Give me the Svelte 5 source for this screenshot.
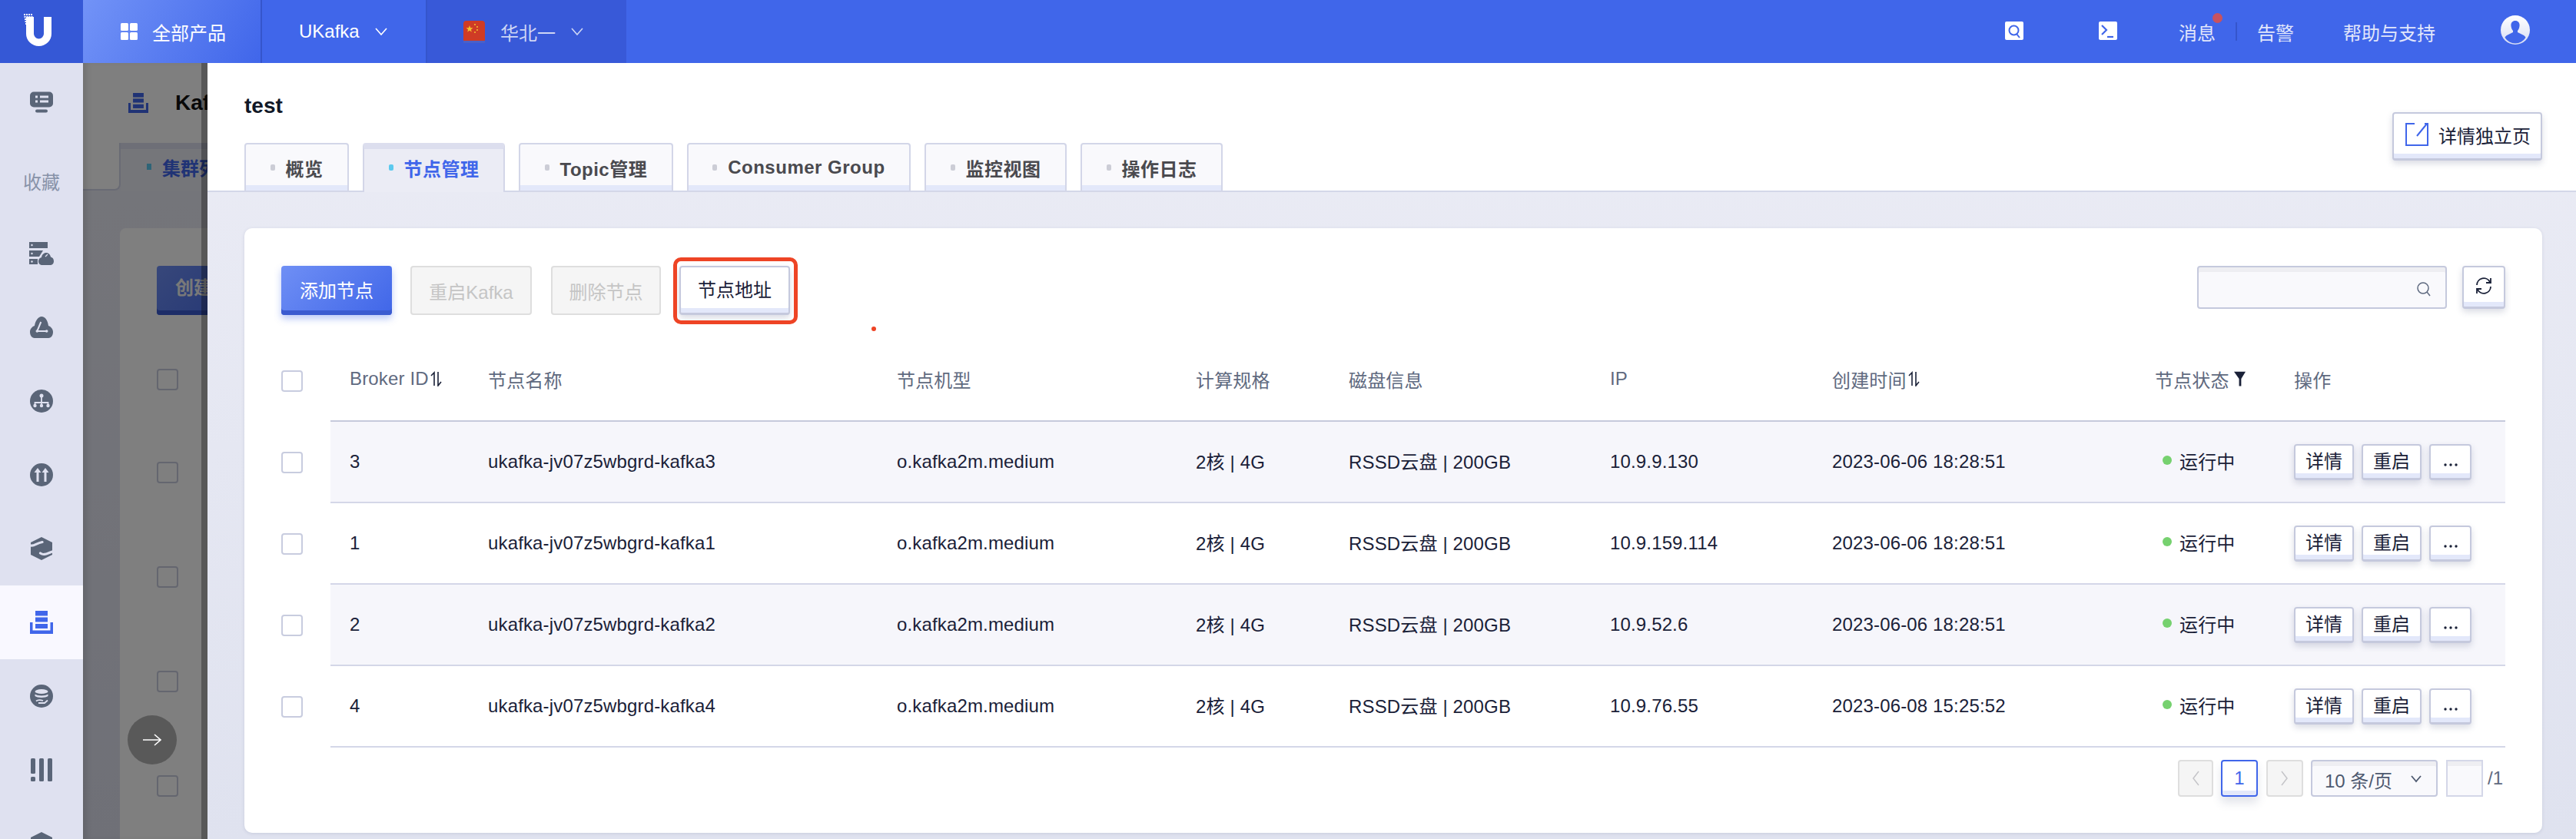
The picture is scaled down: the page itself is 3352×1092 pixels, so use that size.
<script lang="ts">
  const backRows = [0, 1, 2, 3, 4];

  const tabs = [
    { label: '概览' },
    { label: '节点管理', active: true },
    { label: 'Topic管理' },
    { label: 'Consumer Group' },
    { label: '监控视图' },
    { label: '操作日志' }
  ];

  const nodes = [
    { id: 3, name: 'ukafka-jv07z5wbgrd-kafka3', ip: '10.9.9.130', created: '2023-06-06 18:28:51' },
    { id: 1, name: 'ukafka-jv07z5wbgrd-kafka1', ip: '10.9.159.114', created: '2023-06-06 18:28:51' },
    { id: 2, name: 'ukafka-jv07z5wbgrd-kafka2', ip: '10.9.52.6', created: '2023-06-06 18:28:51' },
    { id: 4, name: 'ukafka-jv07z5wbgrd-kafka4', ip: '10.9.76.55', created: '2023-06-08 15:25:52' }
  ];

  const dotRows = [0, 3, 6, 9, 12];
</script>

{#snippet sortIcon()}
  <svg class="sort" viewBox="0 0 16 20" fill="none" stroke="currentColor" stroke-width="1.6" aria-hidden="true">
    <path d="M5 19V2L1 6" />
    <path d="M10 1v18l4-5" />
  </svg>
{/snippet}

{#snippet stackIcon(cls)}
  <svg class={cls} viewBox="0 0 30 30" fill="currentColor" aria-hidden="true">
    <rect x="7" y="0" width="16" height="6.500" />
    <rect x="7" y="8.500" width="16" height="6" />
    <rect x="7" y="17" width="16" height="6" />
    <path d="M0 15h3.500v10.500h23V15H30v15H0z" />
  </svg>
{/snippet}

<div class="app">
  <!-- top bar -->
  <header class="topbar">
    <div class="logo">
      <svg viewBox="0 0 40 44" width="40" height="44" aria-hidden="true">
        <path d="M4 4h10v22a6.500 6.500 0 0 0 13 0V4h10v22a16.500 16 0 0 1-33 0z" fill="#fff" />
        {#each dotRows as y, i}
          <line x1={1 + i * 0.5} y1={y + 1} x2={13 - (i > 2 ? 7 : 0)} y2={y + 1} stroke="#fff" stroke-width="1.800" stroke-dasharray="2 1" />
        {/each}
      </svg>
    </div>
    <div class="nav nav-all">
      <svg viewBox="0 0 22 22" width="22" height="22" fill="#fff" aria-hidden="true">
        <rect width="10" height="10" rx="1.500" />
        <rect x="12" width="10" height="10" rx="1.500" />
        <rect y="12" width="10" height="10" rx="1.500" />
        <rect x="12" y="12" width="10" height="10" rx="1.500" />
      </svg>
      <span>全部产品</span>
    </div>
    <div class="nav nav-product">
      <span>UKafka</span>
      <svg class="chev" viewBox="0 0 16 10" fill="none" stroke="currentColor" stroke-width="1.600" aria-hidden="true"><path d="M1 1l7 8 7-8" /></svg>
    </div>
    <div class="nav nav-region">
      <svg viewBox="0 0 28 29" width="28" height="29" aria-hidden="true">
        <rect width="28" height="29" rx="4" fill="#cf3b25" />
        <rect y="26" width="28" height="3" fill="#4a60c8" />
        <path d="M8 6l1.200 3.200 3.300.1-2.600 2.100.9 3.200L8 12.700l-2.800 1.900.9-3.200L3.500 9.300l3.300-.1z" fill="#f2c230" />
        <circle cx="15" cy="5" r="1" fill="#f2c230" />
        <circle cx="18" cy="8" r="1" fill="#f2c230" />
        <circle cx="18" cy="12" r="1" fill="#f2c230" />
        <circle cx="15" cy="15" r="1" fill="#f2c230" />
      </svg>
      <span>华北一</span>
      <svg class="chev" viewBox="0 0 16 10" fill="none" stroke="currentColor" stroke-width="1.600" aria-hidden="true"><path d="M1 1l7 8 7-8" /></svg>
    </div>

    <div class="top-right">
      <svg class="tool first" viewBox="0 0 24 24" aria-hidden="true">
        <rect width="24" height="24" rx="2" fill="#fff" />
        <circle cx="11.500" cy="11.500" r="6" fill="none" stroke="#4066ea" stroke-width="2" />
        <path d="M15 16l4 5" stroke="#4066ea" stroke-width="2" />
      </svg>
      <svg class="tool" viewBox="0 0 24 24" aria-hidden="true">
        <rect width="24" height="24" rx="2" fill="#fff" />
        <path d="M4 5l6 6-6 6" fill="none" stroke="#4066ea" stroke-width="2.200" />
        <path d="M11 20h8" stroke="#4066ea" stroke-width="2.200" />
      </svg>
      <span class="msg">消息<i class="badge"></i></span>
      <span class="divider"></span>
      <span class="alarm">告警</span>
      <span class="help">帮助与支持</span>
      <svg class="avatar" viewBox="0 0 38 38" aria-hidden="true">
        <defs>
          <linearGradient id="avatarBg" x1="0" y1="0" x2="0" y2="1">
            <stop offset="0" stop-color="#fff" />
            <stop offset="1" stop-color="#d6dcf4" />
          </linearGradient>
        </defs>
        <circle cx="19" cy="19" r="19" fill="url(#avatarBg)" />
        <path d="M19 7c4 0 6 3 5.500 7-.3 3-1.500 5-2.500 6v2l8 4c1.500.8 2.200 2 2.500 3a16 16 0 0 1-27 0c.3-1 1-2.200 2.500-3l8-4v-2c-1-1-2.200-3-2.500-6C13 10 15 7 19 7z" fill="#4066ea" />
      </svg>
    </div>
  </header>

  <div class="body">
    <!-- side navigation -->
    <aside class="sidebar">
      <div class="side-item side-first">
        <svg viewBox="0 0 30 27" aria-hidden="true">
          <rect width="30" height="20" rx="5" fill="currentColor" />
          <rect x="7" y="5" width="3" height="3" fill="#dfe1f0" />
          <rect x="7" y="11" width="3" height="3" fill="#dfe1f0" />
          <rect x="13" y="5" width="11" height="3" fill="#dfe1f0" />
          <rect x="13" y="11" width="11" height="3" fill="#dfe1f0" />
          <rect x="7" y="23" width="16" height="4" rx="2" fill="currentColor" />
        </svg>
      </div>
      <div class="side-label">收藏</div>
      <div class="side-item">
        <svg class="side-wide" viewBox="0 0 32 30" aria-hidden="true">
          <rect width="24" height="8" fill="currentColor" />
          <path d="M0 11h18l-5 8H0zM0 22h11v7H0z" fill="currentColor" />
          <circle cx="3.500" cy="4" r="1.200" fill="#dfe1f0" />
          <circle cx="3.500" cy="15" r="1.200" fill="#dfe1f0" />
          <circle cx="3.500" cy="25.500" r="1.200" fill="#dfe1f0" />
          <path d="M17 30c-3.500 0-5-2.500-5-5 0-2.500 1.500-4.500 4-5 .5-3.500 3-6 6-6 3.500 0 5.500 2.500 6 5.500 2.500.5 4 2.500 4 5.500 0 3-2 5-5 5z" fill="currentColor" />
          <path d="M21 19l3-3" stroke="#dfe1f0" stroke-width="1.200" />
        </svg>
      </div>
      <div class="side-item">
        <svg viewBox="0 0 30 28" aria-hidden="true">
          <path d="M6 28C2 28 0 24 0 20c0-4 3-7 6-8C7 5 11 0 15 0c5 0 8 5 9 12 3 1 6 4 6 8s-2 8-6 8z" fill="currentColor" />
          <path d="M14.300 7L9.300 19h12.400" fill="none" stroke="#dfe1f0" stroke-width="2" />
          <circle cx="9.300" cy="19" r="1.800" fill="#dfe1f0" />
          <circle cx="21.700" cy="19" r="1.800" fill="#dfe1f0" />
        </svg>
      </div>
      <div class="side-item">
        <svg viewBox="0 0 30 30" aria-hidden="true">
          <circle cx="15" cy="15" r="15" fill="currentColor" />
          <circle cx="15" cy="8" r="2.500" fill="#dfe1f0" />
          <path d="M15 9v11M6.500 21v-4h17v4" fill="none" stroke="#dfe1f0" stroke-width="1.800" />
          <circle cx="6.500" cy="21" r="2.200" fill="#dfe1f0" />
          <circle cx="15" cy="21" r="2.200" fill="#dfe1f0" />
          <circle cx="23.500" cy="21" r="2.200" fill="#dfe1f0" />
        </svg>
      </div>
      <div class="side-item">
        <svg viewBox="0 0 30 30" aria-hidden="true">
          <circle cx="15" cy="15" r="15" fill="currentColor" />
          <path d="M8.500 24V12H5.500L10 6l4.500 6h-3v12zM18.500 24V12h-3L20 6l4.500 6h-3v12z" fill="#dfe1f0" />
        </svg>
      </div>
      <div class="side-item">
        <svg viewBox="0 0 28 30" aria-hidden="true">
          <path d="M14 0l14 7v16l-14 7-14-7V7z" fill="currentColor" />
          <path d="M0 11c5 1 7-3 15-4.500M12.500 21c5 3.500 9 0 15.500-2" fill="none" stroke="#dfe1f0" stroke-width="3.200" stroke-linecap="round" />
        </svg>
      </div>
      <div class="side-item side-active">
        {@render stackIcon('side-stack')}
      </div>
      <div class="side-item">
        <svg viewBox="0 0 30 30" aria-hidden="true">
          <circle cx="15" cy="15" r="15" fill="currentColor" />
          <ellipse cx="15" cy="9" rx="8.500" ry="3" fill="#dfe1f0" />
          <path d="M6.500 12.500c3 2.500 14 2.500 17 0v2.500c-3 2.500-14 2.500-17 0z" fill="#dfe1f0" />
          <path d="M8 21.500c3-2.500 6-1.500 9-.5M11 24h8l4-3.500" fill="none" stroke="#dfe1f0" stroke-width="1.800" />
        </svg>
      </div>
      <div class="side-item">
        <svg viewBox="0 0 28 30" fill="currentColor" aria-hidden="true">
          <rect x="0" width="6" height="20" rx="1.500" />
          <rect x="0" y="24" width="6" height="6" rx="1.500" />
          <rect x="11" width="6" height="30" rx="1.500" />
          <rect x="22" width="6" height="30" rx="1.500" />
        </svg>
      </div>
      <div class="side-item">
        <svg viewBox="0 0 28 30" aria-hidden="true">
          <path d="M14 0l14 7v16l-14 7-14-7V7z" fill="currentColor" />
        </svg>
      </div>
    </aside>

    <main class="workspace">
      <!-- list page behind the drawer -->
      <div class="back">
        <div class="back-head">
          {@render stackIcon('back-icon')}
          <span class="back-title">Kafka</span>
        </div>
        <div class="back-tabs">
          <span class="back-spacer"></span>
          <div class="back-tab"><i class="back-dot"></i>集群列表</div>
        </div>
        <div class="back-card">
          <div class="back-btn">创建集群</div>
          {#each backRows as row}
            <div class="back-row"><span class="checkbox"></span></div>
          {/each}
        </div>
      </div>
      <div class="scrim"></div>
      <button class="collapse" aria-label="展开">
        <svg viewBox="0 0 24 16" width="24" height="16" fill="none" stroke="#fff" stroke-width="1.600" aria-hidden="true">
          <path d="M0 8h23M15 1l8 7-8 7" />
        </svg>
      </button>

      <!-- node management drawer -->
      <section class="drawer">
        <div class="drawer-head">
          <div class="drawer-left">
            <h1 class="title">test</h1>
            <div class="tabs">
              {#each tabs as tab}
                <div class="tab" class:tab-active={tab.active}><i class="tab-dot"></i>{tab.label}</div>
              {/each}
            </div>
          </div>
          <button class="btn detail-page">
            <svg viewBox="0 0 30 30" width="30" height="30" fill="none" stroke="#4066ea" stroke-width="2" aria-hidden="true">
              <path d="M12 1H1v28h28V1h-4M15 17L28 1" />
            </svg>
            详情独立页
          </button>
        </div>

        <div class="card">
          <div class="toolbar">
            <button class="btn-primary">添加节点</button>
            <button class="btn-disabled restart">重启Kafka</button>
            <button class="btn-disabled remove">删除节点</button>
            <div class="highlight"><button class="btn address">节点地址</button></div>
            <i class="red-dot"></i>
            <div class="search">
              <svg viewBox="0 0 20 20" width="20" height="20" fill="none" stroke="#5f6a80" stroke-width="1.500" aria-hidden="true">
                <circle cx="9" cy="9" r="7" />
                <path d="M14 14l4 5" />
              </svg>
            </div>
            <button class="btn refresh" aria-label="刷新">
              <svg viewBox="0 0 24 24" width="24" height="24" fill="none" stroke="#1a2138" stroke-width="1.800" aria-hidden="true">
                <path d="M3 11a9 9 0 0 1 17-4M21 13a9 9 0 0 1-17 4" />
                <path d="M21 2v6h-6M3 22v-6h6" />
              </svg>
            </button>
          </div>

          <div class="table">
            <div class="row head">
              <span class="checkbox"></span>
              <div class="cells">
                <span class="th">Broker ID{@render sortIcon()}</span>
                <span class="th">节点名称</span>
                <span class="th">节点机型</span>
                <span class="th">计算规格</span>
                <span class="th">磁盘信息</span>
                <span class="th">IP</span>
                <span class="th">创建时间{@render sortIcon()}</span>
                <span class="th">节点状态
                  <svg class="filter" viewBox="0 0 16 20" fill="#1a2138" aria-hidden="true"><path d="M0 0h16l-6 10v10H7V10z" /></svg>
                </span>
                <span class="th">操作</span>
              </div>
            </div>
            {#each nodes as node}
              <div class="row">
                <span class="checkbox"></span>
                <div class="cells">
                  <span>{node.id}</span>
                  <span>{node.name}</span>
                  <span>o.kafka2m.medium</span>
                  <span class="cjk">2核 | 4G</span>
                  <span class="cjk">RSSD云盘 | 200GB</span>
                  <span>{node.ip}</span>
                  <span>{node.created}</span>
                  <span class="status"><i class="status-dot"></i>运行中</span>
                  <span class="actions">
                    <button class="btn act">详情</button>
                    <button class="btn act">重启</button>
                    <button class="btn act more" aria-label="更多">
                      <svg viewBox="0 0 18 4" width="18" height="4" fill="#1a2138" aria-hidden="true">
                        <circle cx="2" cy="2" r="1.700" /><circle cx="9" cy="2" r="1.700" /><circle cx="16" cy="2" r="1.700" />
                      </svg>
                    </button>
                  </span>
                </div>
              </div>
            {/each}
          </div>

          <div class="pager">
            <span class="page-off">
              <svg viewBox="0 0 10 20" width="10" height="20" fill="none" stroke="#c4c4c8" stroke-width="1.500" aria-hidden="true"><path d="M9 1L2 10l7 9" /></svg>
            </span>
            <span class="page-on">1</span>
            <span class="page-off page-next">
              <svg viewBox="0 0 10 20" width="10" height="20" fill="none" stroke="#c4c4c8" stroke-width="1.500" aria-hidden="true"><path d="M1 1l7 9-7 9" /></svg>
            </span>
            <span class="page-size">10 条/页
              <svg viewBox="0 0 14 10" width="14" height="10" fill="none" stroke="#4e5a70" stroke-width="1.800" aria-hidden="true"><path d="M1 1l6 7 6-7" /></svg>
            </span>
            <span class="page-input"></span>
            <span class="page-total">/1</span>
          </div>
        </div>
      </section>
    </main>
  </div>
</div>

<style>
  :global(body) {
    margin: 0;
    overflow: hidden;
    background: #dfe1f0;
  }

  .app {
    width: 3352px;
    height: 1092px;
    display: flex;
    flex-direction: column;
    overflow: hidden;
    font-family: "Liberation Sans", "Noto Sans CJK SC", sans-serif;
    font-size: 24px;
    color: #1a2138;
  }

  button {
    font: inherit;
    padding: 0;
    cursor: pointer;
  }

  i {
    display: block;
  }

  /* top bar */
  .topbar {
    flex: 0 0 82px;
    display: flex;
    background: #4066ea;
    color: #fff;
  }

  .logo {
    width: 108px;
    background: #3558d6;
    display: flex;
    justify-content: center;
    padding-top: 18px;
    box-sizing: border-box;
    padding-right: 8px;
  }

  .logo svg {
    display: block;
  }

  .nav {
    display: flex;
    align-items: center;
    box-sizing: border-box;
    height: 82px;
    border-right: 2px solid #3555cc;
  }

  .nav-all {
    width: 233px;
    padding-left: 49px;
    gap: 19px;
    background: linear-gradient(120deg, #7293f7 0%, #4066ea 100%);
  }

  .nav-product {
    width: 215px;
    padding-left: 48px;
    gap: 20px;
  }

  .nav-region {
    width: 259px;
    padding-left: 47px;
    background: #3859d8;
    border-right: 0;
    color: #ced6f5;
  }

  .nav-region span {
    margin-left: 20px;
    margin-right: 20px;
  }

  .chev {
    width: 16px;
    height: 10px;
  }

  .top-right {
    flex: 1;
    display: flex;
    align-items: center;
    color: #e2e7fb;
  }

  .tool {
    width: 24px;
    height: 24px;
    margin-right: 98px;
    margin-top: -2px;
  }

  .tool.first {
    margin-left: 1794px;
  }

  .msg {
    position: relative;
    margin-left: -18px;
  }

  .badge {
    position: absolute;
    left: 44px;
    top: -7px;
    width: 13px;
    height: 13px;
    border-radius: 50%;
    background: #c9525f;
  }

  .divider {
    width: 2px;
    height: 24px;
    background: #3555cc;
    margin: 0 26px;
  }

  .alarm {
    margin-right: 64px;
  }

  .help {
    margin-right: 85px;
  }

  .avatar {
    width: 38px;
    height: 38px;
    margin-top: -4px;
  }

  .body {
    flex: 1;
    display: flex;
    min-height: 0;
  }

  /* side navigation */
  .sidebar {
    width: 108px;
    flex: none;
    background: #dfe1f0;
    color: #5a6578;
    overflow: hidden;
  }

  .side-item {
    height: 96px;
    display: flex;
    align-items: center;
    justify-content: center;
  }

  .side-item svg {
    width: 30px;
    height: 30px;
  }

  .side-item .side-wide {
    width: 32px;
  }

  .side-first {
    height: 102px;
  }

  .side-label {
    height: 96px;
    line-height: 108px;
    text-align: center;
    color: #8792a8;
    margin-bottom: 2px;
  }

  .side-active {
    background: #f9f8ff;
    color: #4066ea;
  }

  .side-item :global(.side-stack) {
    width: 30px;
    height: 30px;
  }

  /* list page behind the drawer */
  .workspace {
    flex: 1;
    position: relative;
    overflow: hidden;
  }

  .back {
    height: 100%;
    background: linear-gradient(#ebecf5, #dfe1ef);
  }

  .back-head {
    height: 104px;
    display: flex;
    align-items: center;
    padding-left: 59px;
    gap: 35px;
    background: #fff;
  }

  .back-head :global(.back-icon) {
    width: 26px;
    height: 26px;
    color: #4066ea;
  }

  .back-title {
    font-weight: 700;
    font-size: 28px;
    color: #111;
  }

  .back-tabs {
    display: flex;
    height: 62px;
  }

  .back-spacer {
    width: 49px;
    box-sizing: border-box;
    background: #fff;
    border-bottom: 2px solid #d3d6e8;
    border-right: 2px solid #d3d6e8;
    border-bottom-right-radius: 8px;
  }

  .back-tab {
    display: flex;
    align-items: center;
    gap: 14px;
    padding: 0 34px 8px 34px;
    background: #ebecf5;
    border-top: 8px solid #dcdeee;
    font-weight: 700;
    color: #4066ea;
    width: 300px;
    box-sizing: border-box;
    height: 62px;
  }

  .back-dot {
    width: 6px;
    height: 8px;
    background: #5cc9ee;
  }

  .back-card {
    margin: 49px 0 0 48px;
    padding: 49px 48px;
    background: #fff;
    border-radius: 8px;
    height: 900px;
  }

  .back-btn {
    width: 144px;
    height: 64px;
    line-height: 58px;
    text-align: center;
    color: #f2f2f2;
    border-radius: 4px;
    box-sizing: border-box;
    background: linear-gradient(135deg, #6f8ff5, #4066e8);
    box-shadow: inset 0 -6px 0 #3b5bd0;
    margin-bottom: 70px;
    font-weight: 700;
  }

  .back-row {
    height: 136px;
  }

  .back-btn + .back-row {
    height: 121px;
  }

  .scrim {
    position: absolute;
    inset: 0;
    background: rgba(0, 0, 0, 0.5);
    box-shadow: inset 8px 0 8px -4px rgba(0, 0, 0, 0.12);
  }

  .collapse {
    position: absolute;
    left: 58px;
    top: 849px;
    width: 64px;
    height: 64px;
    border: 0;
    border-radius: 50%;
    background: #595959;
    display: flex;
    align-items: center;
    justify-content: center;
  }

  /* drawer */
  .drawer {
    position: absolute;
    left: 162px;
    right: 0;
    top: 0;
    bottom: 0;
    background: linear-gradient(#ebecf5, #dfe2ef);
    box-shadow: -8px 0 0 rgba(0, 0, 0, 0.3);
  }

  .drawer-head {
    height: 168px;
    box-sizing: border-box;
    background: #fff;
    border-bottom: 2px solid #d4d7e8;
    display: flex;
    justify-content: space-between;
    padding: 36px 44px 0 48px;
  }

  .title {
    margin: 0 0 28px;
    font-size: 28px;
    line-height: 40px;
    font-weight: 700;
    color: #111827;
  }

  .tabs {
    display: flex;
    align-items: flex-start;
    gap: 18px;
  }

  .tab {
    height: 62px;
    box-sizing: border-box;
    display: flex;
    align-items: center;
    padding: 0 31.5px;
    gap: 14px;
    background: #f9f9fc;
    border: 2px solid #d3d6e8;
    border-bottom: 0;
    border-radius: 4px 4px 0 0;
    box-shadow: inset 0 -7px 0 #e3e8fa;
    font-weight: 700;
    letter-spacing: 0.5px;
    color: #4a4a4f;
  }

  .tab-active {
    height: 64px;
    background: #ebecf5;
    border-top-width: 8px;
    border-top-color: #dcdeee;
    box-shadow: none;
    color: #4066ea;
    padding-bottom: 8px;
  }

  .tab-dot {
    width: 6px;
    height: 8px;
    border-radius: 2px;
    background: #cccdd6;
  }

  .tab-active .tab-dot {
    background: #5cc9ee;
  }

  .btn {
    background: #fff;
    border: 2px solid #c5c9dd;
    border-bottom-width: 3px;
    border-radius: 4px;
    box-shadow: inset 0 -6px 0 #e3e8fa, 0 4px 8px rgba(70, 80, 120, 0.2);
    color: #1a2138;
  }

  .detail-page {
    width: 195px;
    height: 63px;
    margin-top: 28px;
    display: flex;
    align-items: center;
    gap: 13px;
    padding: 0 0 4px 15px;
    box-sizing: border-box;
  }

  .card {
    margin: 47px 44px 0 48px;
    height: 787px;
    box-sizing: border-box;
    padding: 49px 48px 0;
    background: #fff;
    border-radius: 10px;
    box-shadow: 0 1px 4px rgba(70, 80, 120, 0.15);
  }

  .toolbar {
    position: relative;
    display: flex;
    align-items: flex-start;
    height: 64px;
  }

  .btn-primary {
    width: 144px;
    height: 64px;
    border: 0;
    border-radius: 4px;
    background: linear-gradient(135deg, #6f8ff5, #4066e8);
    box-shadow: inset 0 -6px 0 #3b5bd0, 0 5px 10px rgba(64, 102, 232, 0.35);
    color: #fff;
    padding-bottom: 4px;
    margin-right: 24px;
  }

  .btn-disabled {
    height: 64px;
    box-sizing: border-box;
    background: #f5f5f5;
    border: 2px solid #dedede;
    border-radius: 4px;
    color: #c5c5c5;
    margin-right: 25px;
  }

  .restart {
    width: 158px;
  }

  .remove {
    width: 143px;
  }

  .highlight {
    position: relative;
    margin-left: -1px;
  }

  /* red annotation drawn on top of the screenshot */
  .highlight::after {
    content: '';
    position: absolute;
    left: -8px;
    top: -11px;
    width: 162px;
    height: 87px;
    box-sizing: border-box;
    border: 5px solid #ee4425;
    border-radius: 10px;
  }

  .address {
    display: block;
    width: 144px;
    height: 64px;
    box-sizing: border-box;
    padding-bottom: 4px;
  }

  .red-dot {
    position: absolute;
    left: 768px;
    top: 79px;
    width: 6px;
    height: 6px;
    border-radius: 50%;
    background: #ee4425;
  }

  .search {
    margin-left: auto;
    width: 325px;
    height: 56px;
    box-sizing: border-box;
    background: #f9f9fc;
    border: 2px solid #c5c9dd;
    border-radius: 4px;
    box-shadow: inset 0 6px 0 #eeeef2;
    display: flex;
    align-items: center;
    justify-content: flex-end;
    padding: 4px 18px 0 0;
  }

  .refresh {
    margin-left: 20px;
    width: 56px;
    height: 56px;
    box-sizing: border-box;
    display: flex;
    align-items: center;
    justify-content: center;
    padding-bottom: 4px;
  }

  /* table */
  .table {
    margin-top: 33px;
  }

  .row {
    display: flex;
    align-items: center;
    height: 106px;
  }

  .cells {
    flex: 1;
    height: 100%;
    box-sizing: border-box;
    display: grid;
    grid-template-columns: 180px 532px 389px 199px 340px 289px 420px 181px 1fr;
    align-items: center;
    padding-left: 25px;
    border-bottom: 2px solid #d4d7e8;
    letter-spacing: 0.15px;
  }

  .row:nth-child(even) .cells {
    background: #f6f6fb;
  }

  .head .cells {
    border-bottom-color: #c6cadc;
  }

  .checkbox {
    display: block;
    flex: none;
    width: 28px;
    height: 28px;
    margin-right: 36px;
    box-sizing: border-box;
    border: 2px solid #c8ccdf;
    border-radius: 4px;
    background: #fff;
  }

  .th {
    display: flex;
    align-items: center;
    color: #5f6a80;
    padding-bottom: 4px;
  }

  .cjk {
    padding-bottom: 4px;
  }

  .sort {
    width: 16px;
    height: 20px;
    margin-left: 2px;
    color: #1a2138;
  }

  .filter {
    width: 15px;
    height: 20px;
    margin-left: 6px;
  }

  .status {
    display: flex;
    align-items: center;
    padding: 0 0 4px 10px;
    gap: 10px;
  }

  .status-dot {
    width: 12px;
    height: 12px;
    border-radius: 50%;
    background: #76d16f;
  }

  .actions {
    display: flex;
    gap: 10px;
  }

  .act {
    width: 78px;
    height: 47px;
    box-sizing: border-box;
    padding-bottom: 4px;
  }

  .more {
    width: 55px;
  }

  /* pagination */
  .pager {
    margin-top: 16px;
    display: flex;
    align-items: center;
    justify-content: flex-end;
    gap: 10.5px;
    color: #4e5a70;
  }

  .pager > span {
    height: 48px;
    box-sizing: border-box;
    display: flex;
    align-items: center;
    justify-content: center;
  }

  .page-off {
    width: 46px;
    background: #f5f5f5;
    border: 2px solid #dedede;
    border-radius: 4px;
  }

  .page-next {
    width: 48px;
  }

  .page-on {
    width: 48px;
    background: #fff;
    color: #4066ea;
    border: 2px solid #4066ea;
    border-radius: 4px;
    box-shadow: inset 0 -6px 0 #e3e8fa, 0 8px 12px rgba(70, 80, 120, 0.15);
  }

  .pager > .page-size {
    width: 165px;
    gap: 24px;
    justify-content: flex-start;
    background: #f9f9fc;
    border: 2px solid #c5c9dd;
    border-radius: 4px;
    box-shadow: inset 0 6px 0 #eeeef2;
    padding: 2px 0 0 16px;
  }

  .page-input {
    width: 48px;
    background: #f9f9fc;
    border: 2px solid #d4d7e8;
    box-shadow: inset 0 6px 0 #eeeef2;
  }

  .page-total {
    margin-left: -4px;
    margin-right: 3px;
    width: 20px;
    color: #5f6a80;
  }
</style>
